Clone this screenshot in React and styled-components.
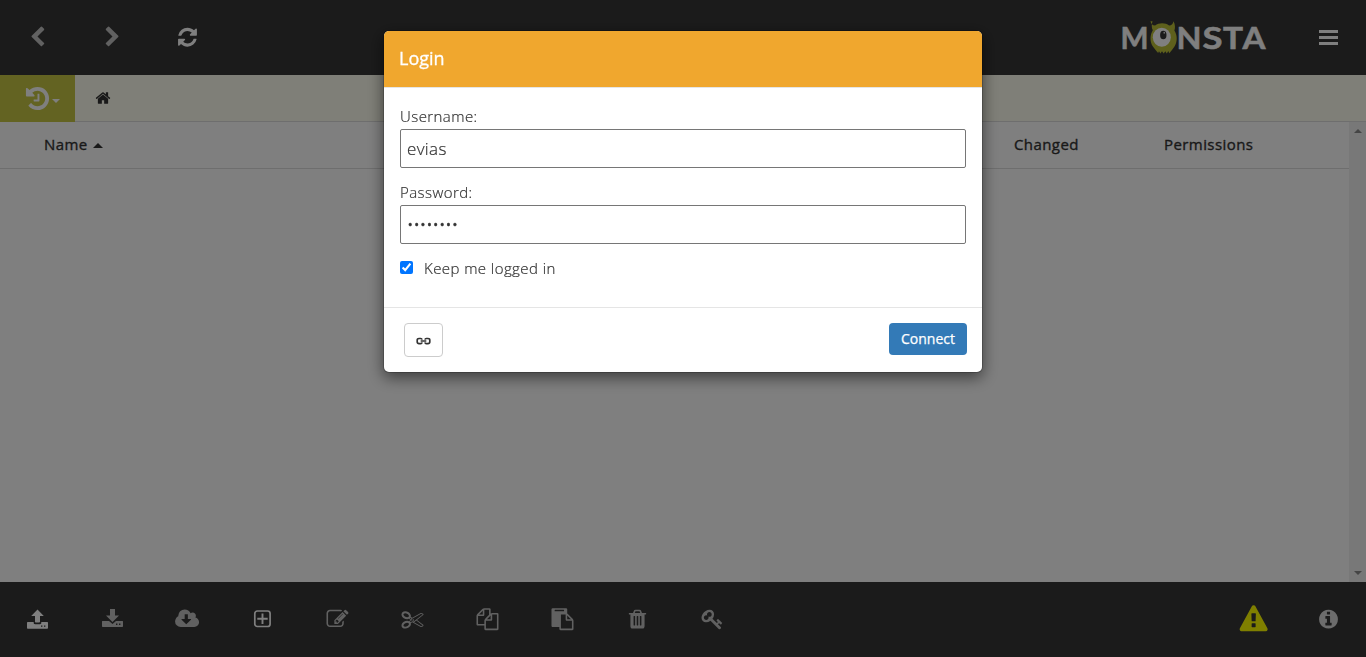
import React, { useState } from "react";
import styled, { createGlobalStyle } from "styled-components";

const icons = {
  back: "M1427 301l-531 531 531 531q19 19 19 45t-19 45l-166 166q-19 19-45 19t-45-19l-742-742q-19-19-19-45t19-45l742-742q19-19 45-19t45 19l166 166q19 19 19 45t-19 45z",
  forward:
    "M1363 877l-742 742q-19 19-45 19t-45-19l-166-166q-19-19-19-45t19-45l531-531-531-531q-19-19-19-45t19-45l166-166q19-19 45-19t45 19l742 742q19 19 19 45t-19 45z",
  refresh:
    "M1639 1056q0 5-1 7-64 268-268 434.5t-478 166.5q-146 0-282.5-55t-243.5-157l-129 129q-19 19-45 19t-45-19-19-45v-448q0-26 19-45t45-19h448q26 0 45 19t19 45-19 45l-137 137q71 66 161 102t187 36q134 0 250-65t186-179q11-17 53-117 8-23 30-23h192q13 0 22.5 9.5t9.5 22.5zm25-800v448q0 26-19 45t-45 19h-448q-26 0-45-19t-19-45 19-45l138-138q-148-137-349-137-134 0-250 65t-186 179q-11 17-53 117-8 23-30 23h-199q-13 0-22.5-9.5t-9.5-22.5v-7q65-268 270-434.5t480-166.5q146 0 284 55.5t245 156.5l130-129q19-19 45-19t45 19 19 45z",
  history:
    "M1664 896q0 156-61 298t-164 245-245 164-298 61q-172 0-327-72.5t-264-204.5q-7-10-6.5-22.5t8.5-20.5l137-138q10-9 25-9 16 2 23 12 73 95 179 147t225 52q104 0 198.5-40.5t163.5-109.5 109.5-163.5 40.5-198.5-40.5-198.5-109.5-163.5-163.5-109.5-198.5-40.5q-98 0-188 35.5t-160 101.5l137 138q31 30 14 69-17 40-59 40h-448q-26 0-45-19t-19-45v-448q0-42 40-59 39-17 69 14l130 129q107-101 244.5-156.5t284.5-55.5q156 0 298 61t245 164 164 245 61 298zm-640-288v448q0 14-9 23t-23 9h-320q-14 0-23-9t-9-23v-64q0-14 9-23t23-9h224v-352q0-14 9-23t23-9h64q14 0 23 9t9 23z",
  home: "M1472 992v480q0 26-19 45t-45 19h-384v-384h-256v384h-384q-26 0-45-19t-19-45v-480q0-1 .5-3t.5-3l575-474 575 474q1 2 1 6zm223-69l-62 74q-8 9-21 11h-3q-13 0-21-7l-692-577-692 577q-12 8-24 7-13-2-21-11l-62-74q-8-10-7-23.5t11-21.5l719-599q32-26 76-26t76 26l244 204v-195q0-14 9-23t23-9h192q14 0 23 9t9 23v408l219 182q10 8 11 21.5t-7 23.5z",
  cloud:
    "M1216 928q0-14-9-23t-23-9h-224v-352q0-13-9.5-22.5t-22.5-9.5h-192q-13 0-22.5 9.5t-9.5 22.5v352h-224q-13 0-22.5 9.5t-9.5 22.5q0 14 9 23l352 352q9 9 23 9t23-9l351-351q10-12 10-24zm640 224q0 159-112.5 271.5t-271.5 112.5h-1088q-185 0-316.5-131.5t-131.5-316.5q0-130 70-240t188-165q-2-30-2-43 0-212 150-362t362-150q156 0 285.5 87t188.5 231q71-62 166-62 106 0 181 75t75 181q0 76-41 138 130 31 213.5 135.5t83.5 238.5z",
  edit: "M888 1184l116-116-152-152-116 116v56h96v96h56zm440-720q-16-16-33 1l-350 350q-17 17-1 33t33-1l350-350q17-17 1-33zm80 594v190q0 119-84.5 203.5t-203.5 84.5h-832q-119 0-203.5-84.5t-84.5-203.5v-832q0-119 84.5-203.5t203.5-84.5h832q63 0 117 25 15 7 18 23 3 17-9 29l-49 49q-14 14-32 8-23-6-45-6h-832q-66 0-113 47t-47 113v832q0 66 47 113t113 47h832q66 0 113-47t47-113v-126q0-13 9-22l64-64q15-15 35-7t20 29zm-96-738l288 288-672 672h-288v-288zm444 132l-92 92-288-288 92-92q28-28 68-28t68 28l152 152q28 28 28 68t-28 68z",
  cut: "M960 896q26 0 45 19t19 45-19 45-45 19-45-19-19-45 19-45 45-19zm300 64l507 398q28 20 25 56-5 35-35 51l-128 64q-13 7-29 7-17 0-31-8l-690-387-110 66q-8 4-12 5 14 49 10 97-7 77-56 147.5t-132 123.5q-132 84-277 84-136 0-222-78-90-84-79-207 7-76 56-147t131-124q132-84 278-84 83 0 151 31 9-13 22-22l122-73-122-73q-13-9-22-22-68 31-151 31-146 0-278-84-82-53-131-124t-56-147q-5-59 15.5-113t63.5-93q85-79 222-79 145 0 277 84 83 52 132 123t56 148q4 48-10 97 4 1 12 5l110 66 690-387q14-8 31-8 16 0 29 7l128 64q30 16 35 51 3 36-25 56zm-681-260q46-42 21-108t-106-117q-92-59-192-59-74 0-113 36-46 42-21 108t106 117q92 59 192 59 74 0 113-36zm-85 745q81-51 106-117t-21-108q-39-36-113-36-100 0-192 59-81 51-106 117t21 108q39 36 113 36 100 0 192-59zm178-613l96 58v-11q0-36 33-56l14-8-79-44-26 26q-3 3-10 11t-12 12q-2 2-4 3.5t-3 2.5zm224 224l96 32 736-576-128-64-768 431v113l-160 96 9 8q2 2 7 6 4 4 11 12t11 12l26 26zm704 416l128-64-520-408-177 138q-2 3-13 7z",
  copy: "M1696 384q40 0 68 28t28 68v1216q0 40-28 68t-68 28h-960q-40 0-68-28t-28-68v-288h-544q-40 0-68-28t-28-68v-672q0-40 20-88t48-76l408-408q28-28 76-48t88-20h416q40 0 68 28t28 68v328q68-40 128-40h416zm-544 213l-299 299h299v-299zm-640-384l-299 299h299v-299zm196 647l316-316v-416h-384v416q0 40-28 68t-68 28h-416v640h512v-256q0-40 20-88t48-76zm956 804v-1152h-384v416q0 40-28 68t-68 28h-416v640h896z",
  paste:
    "M768 1664h896v-640h-416q-40 0-68-28t-28-68v-416h-384v1152zm256-1440v-64q0-13-9.5-22.5t-22.5-9.5h-704q-13 0-22.5 9.5t-9.5 22.5v64q0 13 9.5 22.5t22.5 9.5h704q13 0 22.5-9.5t9.5-22.5zm256 672h299l-299-299v299zm512 128v672q0 40-28 68t-68 28h-960q-40 0-68-28t-28-68v-160h-544q-40 0-68-28t-28-68v-1344q0-40 28-68t68-28h1088q40 0 68 28t28 68v328q21 13 36 28l408 408q28 28 48 76t20 88z",
  trash:
    "M704 1376v-704q0-14-9-23t-23-9h-64q-14 0-23 9t-9 23v704q0 14 9 23t23 9h64q14 0 23-9t9-23zm256 0v-704q0-14-9-23t-23-9h-64q-14 0-23 9t-9 23v704q0 14 9 23t23 9h64q14 0 23-9t9-23zm256 0v-704q0-14-9-23t-23-9h-64q-14 0-23 9t-9 23v704q0 14 9 23t23 9h64q14 0 23-9t9-23zm-544-992h448l-48-117q-7-9-17-11h-317q-10 2-17 11zm928 32v64q0 14-9 23t-23 9h-96v948q0 83-47 143.5t-113 60.5h-832q-66 0-113-58.5t-47-141.5v-952h-96q-14 0-23-9t-9-23v-64q0-14 9-23t23-9h309l70-167q15-37 54-63t79-26h320q40 0 79 26t54 63l70 167h309q14 0 23 9t9 23z",
  key: "M832 512q0-80-56-136t-136-56-136 56-56 136q0 42 19 83-41-19-83-19-80 0-136 56t-56 136 56 136 136 56 136-56 56-136q0-42-19-83 41 19 83 19 80 0 136-56t56-136zm851 704q0 17-49 66t-66 49q-9 0-28.5-16t-36.5-33-38.5-40-24.5-26l-96 96 220 220q28 28 28 68 0 42-39 81t-81 39q-40 0-68-28l-671-671q-176 131-365 131-163 0-265.5-102.5t-102.5-265.5q0-160 95-313t248-248 313-95q163 0 265.5 102.5t102.5 265.5q0 189-131 365l355 355 96-96q-3-3-26-24.5t-40-38.5-33-36.5-16-28.5q0-17 49-66t66-49q13 0 23 10 6 6 46 44.5t82 79.5 86.5 86 73 78 28.5 41z",
  warning:
    "M1024 1375v-190q0-14-9.5-23.5t-22.5-9.5h-192q-13 0-22.5 9.5t-9.5 23.5v190q0 14 9.5 23.5t22.5 9.5h192q13 0 22.5-9.5t9.5-23.5zm-2-374l18-459q0-12-10-19-13-11-24-11h-220q-11 0-24 11-10 7-10 21l17 457q0 10 10 16.5t24 6.5h185q14 0 23.5-6.5t10.5-16.5zm-14-934l768 1408q35 63-2 126-17 29-46.5 46t-63.5 17h-1536q-34 0-63.5-17t-46.5-46q-37-63-2-126l768-1408q17-31 47-49t65-18 65 18 47 49z",
  info: "M1152 1376v-160q0-14-9-23t-23-9h-96v-512q0-14-9-23t-23-9h-320q-14 0-23 9t-9 23v160q0 14 9 23t23 9h96v320h-96q-14 0-23 9t-9 23v160q0 14 9 23t23 9h448q14 0 23-9t9-23zm-128-896v-160q0-14-9-23t-23-9h-192q-14 0-23 9t-9 23v160q0 14 9 23t23 9h192q14 0 23-9t9-23zm640 416q0 209-103 385.5t-279.5 279.5-385.5 103-385.5-103-279.5-279.5-103-385.5 103-385.5 279.5-279.5 385.5-103 385.5 103 279.5 279.5 103 385.5z",
};

const Icon = ({ name, size = 22, box = "-40 -16 1792 1792" }) => (
  <svg width={size} height={size} viewBox={box} fill="currentColor">
    <path d={icons[name]} />
  </svg>
);

const UploadIcon = () => (
  <svg width="22" height="22" viewBox="0 0 22 22" fill="currentColor">
    <path d="M11.500 1.500l6.300 6.500h-3.800v5.500c0 .8-.6 1-1 1h-3c-.6 0-1-.4-1-1V8H5.200z" />
    <path
      fillRule="evenodd"
      d="M1.700 14h6v1c0 .8.6 1.200 1.300 1.200h5c.8 0 1.300-.5 1.300-1.200v-1h6c.4 0 .7.300.7.700v5c0 .7-.5 1.100-1.100 1.100H2.100c-.7 0-1.100-.5-1.100-1.100v-5c0-.4.300-.7.700-.7zM15 17.400v1.400h1.400v-1.400zM18 17.400v1.400h1.400v-1.400z"
    />
  </svg>
);

const DownloadIcon = () => (
  <svg width="22" height="22" viewBox="0 0 22 22" fill="currentColor">
    <path d="M9 1h5v6.500h4L11.500 14 5 7.500h4z" />
    <path
      fillRule="evenodd"
      d="M1.500 13H8l3.500 3 3.500-3h6.500c.3 0 .5.200.5.500V18c0 .6-.4 1-1 1H2c-.6 0-1-.4-1-1v-4.500c0-.3.200-.5.500-.5zM15 15.500v1.400h1.400v-1.400zM18 15.500v1.400h1.400v-1.400z"
    />
  </svg>
);

const PlusIcon = () => (
  <svg width="18" height="18" viewBox="-0.800 0 18 18" fill="none" stroke="currentColor">
    <rect x="1" y="1" width="15.300" height="15.500" rx="2.500" strokeWidth="1.700" />
    <path d="M8.700 3.500v10.500M3.500 8.800h10.400" strokeWidth="1.900" />
  </svg>
);

const LinkIcon = () => (
  <svg width="15" height="8" viewBox="0 0 16 8" fill="none" stroke="#333" strokeWidth="1.800">
    <path d="M6.500 2.600C6.300 1.700 5.700 1.300 5 1.300H3.200C2 1.300 1.300 2 1.300 3v2C1.300 6 2 6.700 3.200 6.700H5c.7 0 1.300-.4 1.500-1.300M9.500 2.600c.2-.9.800-1.300 1.500-1.300h1.800c1.200 0 1.900.7 1.900 1.700v2c0 1-.7 1.700-1.900 1.700H11c-.7 0-1.300-.4-1.500-1.300M5 4h6" />
  </svg>
);

const Logo = () => (
  <svg width="154" height="59" viewBox="-4 -12 154 59">
    <path
      fill="#bcc038"
      d="M29.500 1.200c.6 2.600 1.800 4.200 4.600 4.300 3.800-3 10.300-3 14 0 2.700-.1 3.900-1.700 4.400-4.300 1.800 3.500 1.800 6.600.9 9.300 3.200 5 3 11.500.1 16-1.700 2.300-3.300 4.500-5.200 6.700l-1-2.200-1.500 2.600-1.500-2.300-1.600 2.300-1.700-2.300-1.600 2.300-1.400-2.400-.9 1.700c-1.900-2-3.600-4.200-5.200-6.400-3-4.600-3.200-11-.1-16.200-1.400-2.700-1.300-5.800-.3-9.100z"
    />
    <ellipse cx="40.800" cy="17.300" rx="9" ry="9.500" fill="#fff" />
    <ellipse cx="42.300" cy="15" rx="3.200" ry="4.300" fill="#373737" />
    <ellipse cx="43.200" cy="12.800" rx="0.700" ry="1" fill="#fff" />
    <LogoLetter x="-0.500" y="28.500" textLength="28">M</LogoLetter>
    <LogoLetter x="55.500" y="28.500" textLength="25">N</LogoLetter>
    <LogoLetter x="81.500" y="28.500" textLength="20">S</LogoLetter>
    <LogoLetter x="102" y="28.500" textLength="20">T</LogoLetter>
    <LogoLetter x="121.500" y="28.500" textLength="23">A</LogoLetter>
  </svg>
);

const tools = [
  { id: "upload", icon: <UploadIcon />, active: true },
  { id: "download", icon: <DownloadIcon /> },
  { id: "cloud", icon: <Icon name="cloud" size={24} box="-70 0 1920 1792" /> },
  { id: "new", icon: <PlusIcon />, active: true },
  { id: "edit", icon: <Icon name="edit" /> },
  { id: "cut", icon: <Icon name="cut" /> },
  { id: "copy", icon: <Icon name="copy" /> },
  { id: "paste", icon: <Icon name="paste" /> },
  { id: "trash", icon: <Icon name="trash" /> },
  { id: "key", icon: <Icon name="key" /> },
];

const App = () => {
  const [username, setUsername] = useState("evias");
  const [password, setPassword] = useState("password");
  const [remember, setRemember] = useState(true);

  return (
    <>
      <GlobalStyle />
      <Page>
        <TopBar>
          <BarButton>
            <Icon name="back" />
          </BarButton>
          <BarButton>
            <Icon name="forward" />
          </BarButton>
          <BarButton active>
            <Icon name="refresh" />
          </BarButton>
          <Spacer />
          <Brand>
            <Logo />
          </Brand>
          <BarButton active>
            <MenuBars>
              <span />
              <span />
              <span />
            </MenuBars>
          </BarButton>
        </TopBar>
        <PathBar>
          <HistoryButton>
            <Icon name="history" size={27} box="0 0 1792 1792" />
            <Caret />
          </HistoryButton>
          <HomeLink>
            <Icon name="home" size={16} box="0 0 1792 1792" />
          </HomeLink>
        </PathBar>
        <FileArea>
          <Files>
            <HeaderRow>
              <Column>
                Name <SortCaret />
              </Column>
              <Column>Changed</Column>
              <Column>Permissions</Column>
            </HeaderRow>
          </Files>
          <ScrollTrack>
            <ScrollArrow up />
            <ScrollArrow />
          </ScrollTrack>
        </FileArea>
        <BottomBar>
          {tools.map((tool) => (
            <BarButton key={tool.id} active={tool.active}>
              {tool.icon}
            </BarButton>
          ))}
          <Spacer />
          <BarButton warning>
            <Icon name="warning" size={28} />
          </BarButton>
          <BarButton muted>
            <Icon name="info" />
          </BarButton>
        </BottomBar>
      </Page>
      <Backdrop>
        <Dialog>
          <DialogHeader>
            <DialogTitle>Login</DialogTitle>
          </DialogHeader>
          <DialogBody>
            <Label>Username:</Label>
            <Input value={username} onChange={(e) => setUsername(e.target.value)} />
            <Label>Password:</Label>
            <Input
              type="password"
              value={password}
              onChange={(e) => setPassword(e.target.value)}
            />
            <CheckLabel>
              <Checkbox
                type="checkbox"
                checked={remember}
                onChange={(e) => setRemember(e.target.checked)}
              />
              Keep me logged in
            </CheckLabel>
          </DialogBody>
          <DialogFooter>
            <LinkButton>
              <LinkIcon />
            </LinkButton>
            <ConnectButton>Connect</ConnectButton>
          </DialogFooter>
        </Dialog>
      </Backdrop>
    </>
  );
};

const GlobalStyle = createGlobalStyle`
  * {
    box-sizing: border-box;
  }
  body {
    margin: 0;
    overflow: hidden;
    font-family: "Open Sans", sans-serif;
    color: #333;
  }
  svg {
    display: block;
    flex: none;
    overflow: visible;
  }
`;

const Page = styled.div`
  display: flex;
  flex-direction: column;
  height: 100vh;
  background-color: #ffffff;
`;

const TopBar = styled.div`
  display: flex;
  height: 75px;
  background-color: #373737;
`;

const BottomBar = styled(TopBar)``;

const BarButton = styled.div.withConfig({
  shouldForwardProp: (prop) => !["active", "muted", "warning"].includes(prop),
})`
  display: flex;
  align-items: center;
  justify-content: center;
  width: 75px;
  height: 75px;
  padding: 0 1px 1px 0;
  color: ${(props) => {
    if (props.warning) return "#ffff00";
    if (props.muted) return "#d8d8d8";
    return props.active ? "#ffffff" : "#c3c3c3";
  }};
`;

const Spacer = styled.div`
  flex: 1;
`;

const Brand = styled.div`
  display: flex;
  align-items: center;
  padding-right: 20px;
`;

const LogoLetter = styled.text.attrs({ lengthAdjust: "spacingAndGlyphs" })`
  font-family: Lato, sans-serif;
  font-size: 30px;
  font-weight: 700;
  fill: #ffffff;
  stroke: #ffffff;
  stroke-width: 0.5px;
`;

const MenuBars = styled.div`
  display: flex;
  flex-direction: column;
  gap: 3px;
  width: 19px;
  margin: 1px 0 0 1px;

  span {
    height: 3px;
    background-color: currentColor;
  }
`;

const PathBar = styled.div`
  display: flex;
  height: 47px;
  background-color: #fffff0;
  border-bottom: 1px solid #dddddd;
`;

const HistoryButton = styled.div`
  display: flex;
  align-items: center;
  justify-content: center;
  gap: 1px;
  width: 75px;
  height: 47px;
  padding-left: 9px;
  padding-bottom: 1px;
  background-color: #c7c744;
  color: #ffffff;
`;

const Caret = styled.span`
  width: 0;
  height: 0;
  margin-top: 5px;
  border-left: 4px solid transparent;
  border-right: 4px solid transparent;
  border-top: 4px solid;
`;

const SortCaret = styled.span`
  display: inline-block;
  width: 0;
  height: 0;
  margin-left: 1px;
  vertical-align: 2px;
  border-left: 5px solid transparent;
  border-right: 5px solid transparent;
  border-bottom: 5px solid;
`;

const HomeLink = styled.div`
  display: flex;
  align-items: center;
  padding-left: 20px;
`;

const FileArea = styled.div`
  display: flex;
  flex: 1;
`;

const Files = styled.div`
  flex: 1;
`;

const HeaderRow = styled.div`
  display: grid;
  grid-template-columns: 970px 150px 1fr;
  align-items: center;
  height: 47px;
  padding: 0 0 2px 44px;
  border-bottom: 1px solid #dddddd;
`;

const Column = styled.div`
  font-size: 15px;
  font-weight: 400;
  letter-spacing: 0.42px;
  line-height: 20px;
  -webkit-text-stroke: 0.35px #333;
`;

const ScrollTrack = styled.div`
  display: flex;
  flex-direction: column;
  align-items: center;
  justify-content: space-between;
  width: 17px;
  padding: 7px 0;
  background-color: #f1f1f1;
`;

const ScrollArrow = styled.div.withConfig({
  shouldForwardProp: (prop) => prop !== "up",
})`
  border-left: 4px solid transparent;
  border-right: 4px solid transparent;
  ${(props) => (props.up ? "border-bottom" : "border-top")}: 4px solid #8a8a8a;
`;

const Backdrop = styled.div`
  position: fixed;
  inset: 0;
  display: flex;
  align-items: flex-start;
  justify-content: center;
  padding-top: 30px;
  background-color: rgba(0, 0, 0, 0.5);
`;

const Dialog = styled.div`
  width: 600px;
  background-color: #ffffff;
  background-clip: padding-box;
  border: 1px solid rgba(0, 0, 0, 0.2);
  border-radius: 6px;
  box-shadow: 0 5px 15px rgba(0, 0, 0, 0.5);
`;

const DialogHeader = styled.div`
  height: 57px;
  padding: 14px 15px;
  background-color: #f0a72e;
  border-bottom: 1px solid #e5e5e5;
  border-radius: 5px 5px 0 0;
`;

const DialogTitle = styled.h4`
  margin: 0;
  color: #ffffff;
  font-size: 18px;
  font-weight: 400;
  line-height: 26px;
  -webkit-text-stroke: 0.3px #ffffff;
`;

const DialogBody = styled.div`
  height: 219px;
  padding: 18px 16px;
`;

const Label = styled.label`
  display: block;
  height: 23px;
  font-size: 15px;
  font-weight: 300;
  letter-spacing: 0.43px;
  line-height: 21px;
  -webkit-text-stroke: 0.2px #333;
`;

const Input = styled.input`
  display: block;
  width: 100%;
  height: 39px;
  margin-bottom: 14px;
  padding: 1px 6px;
  border: 1px solid #767676;
  border-radius: 2px;
  outline: none;
  color: #333;
  font-family: "Open Sans", sans-serif;
  font-size: 17px;
  font-weight: 300;
  letter-spacing: ${(props) => (props.type === "password" ? "0" : "0.35px")};
  -webkit-text-stroke: ${(props) =>
    props.type === "password" ? "0.5px #333" : "0.2px #333"};
`;

const CheckLabel = styled(Label)`
  display: flex;
  align-items: center;
  height: 21px;
`;

const Checkbox = styled.input`
  width: 13px;
  height: 13px;
  margin: 0 11px 2px 0;
`;

const DialogFooter = styled.div`
  display: flex;
  align-items: flex-start;
  justify-content: space-between;
  height: 65px;
  padding: 15px 15px 15px 20px;
  border-top: 1px solid #e5e5e5;
`;

const LinkButton = styled.button`
  display: flex;
  align-items: center;
  justify-content: center;
  width: 39px;
  height: 34px;
  padding: 1px 0 0;
  background-color: #ffffff;
  border: 1px solid #cccccc;
  border-radius: 4px;
`;

const ConnectButton = styled.button`
  width: 78px;
  height: 32px;
  padding: 0 0 2px;
  background-color: #337ab7;
  border: none;
  border-radius: 4px;
  color: #ffffff;
  font-family: "Open Sans", sans-serif;
  font-size: 14px;
  font-weight: 400;
  -webkit-text-stroke: 0.25px #ffffff;
`;

export default App;
